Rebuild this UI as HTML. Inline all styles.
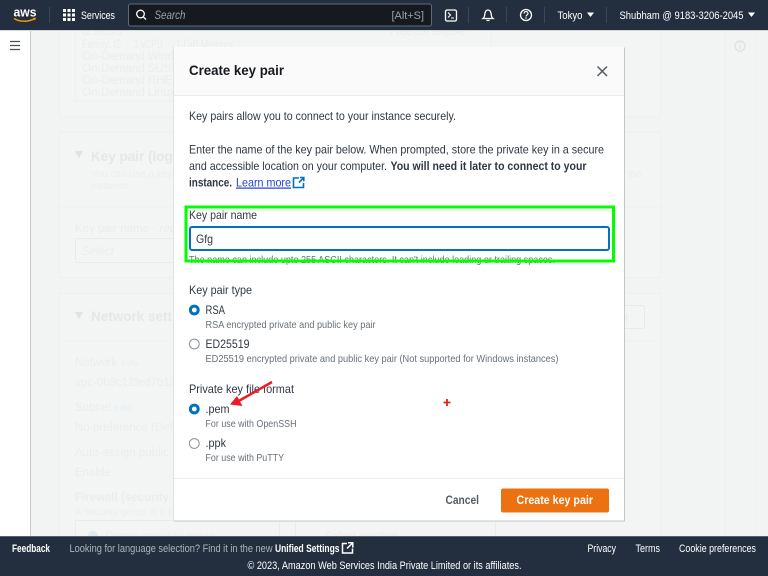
<!DOCTYPE html>
<html lang="en"><head><meta charset="utf-8"><title>Create key pair</title>
<style>
html,body{margin:0;padding:0;width:768px;height:576px;overflow:hidden;background:#f2f3f3}
svg{display:block;position:absolute;left:0;top:0}
text{font-family:"Liberation Sans",sans-serif;font-size:12px;fill:#2f3842;white-space:pre}
.bg{fill:#ebeded;font-size:11.5px}
.bgs{fill:#eceeee;font-size:10px}
.bgb{fill:#e6e8e8;font-size:13.5px;font-weight:bold}
.bl{fill:#e9f0f3;font-size:9.500px;font-weight:bold}
.d{fill:#687078;font-size:10.500px}
.h{fill:#fff;font-size:11px}
.hb{fill:#fff;font-size:11px;font-weight:bold}
</style></head><body>
<svg width="768" height="576" viewBox="0 0 768 576" xmlns="http://www.w3.org/2000/svg">
<rect width="768" height="576" fill="#f2f3f3"/>
<rect x="0" y="30" width="30" height="506" fill="#fff"/>
<rect x="30" y="30" width="1" height="506" fill="#c6cbcc"/>
<path d="M10 41.5h10M10 45.500h10M10 49.500h10" stroke="#4a525b" stroke-width="1.300"/>
<!-- background cards -->
<g fill="#f3f4f4" stroke="#eef0f0">
<rect x="59.500" y="20" width="601" height="97"/>
<rect x="59.500" y="132.500" width="601" height="145"/>
<rect x="59.500" y="293.500" width="601" height="260"/>
<rect x="75.500" y="20" width="416" height="81"/>
</g>
<path d="M60 207h600M60 341h600" stroke="#f0f1f1"/>
<path d="M725.500 30V536M755.500 30V536" stroke="#eef0f0"/>
<circle cx="740" cy="46" r="5" fill="none" stroke="#e0e3e3" stroke-width="1.400"/>
<path d="M740 45v4M740 42.500v1.300" stroke="#e0e3e3" stroke-width="1.400"/>
<text class="bg" x="82" y="35" textLength="40" lengthAdjust="spacingAndGlyphs">t2.micro</text>
<text class="bg" x="390" y="35" textLength="76" lengthAdjust="spacingAndGlyphs">Free tier eligible</text>
<text class="bg" x="82" y="48" textLength="39" lengthAdjust="spacingAndGlyphs">Family: t2</text>
<text class="bg" x="134" y="48" textLength="29" lengthAdjust="spacingAndGlyphs">1 vCPU</text>
<text class="bg" x="176" y="48" textLength="57" lengthAdjust="spacingAndGlyphs">1 GiB Memory</text>
<text class="bg" x="82" y="60">On-Demand Windows pricing</text>
<text class="bg" x="82" y="72">On-Demand SUSE pricing</text>
<text class="bg" x="82" y="84">On-Demand RHEL pricing</text>
<text class="bg" x="82" y="96">On-Demand Linux pricing</text>
<path d="M75 151h8l-4 7z" fill="#dfe2e2"/>
<text class="bgb" x="91" y="161">Key pair (login)</text>
<text class="bgs" x="91" y="177">You can use a key pair</text>
<text class="bgs" x="91" y="189">instance.</text>
<text class="bgs" x="628" y="177">the</text>
<text class="bg" x="75" y="232">Key pair name - <tspan font-style="italic">required</tspan></text>
<rect x="75.500" y="238.500" width="120" height="24" rx="2" fill="#f3f4f4" stroke="#e9ebeb"/>
<text class="bg" x="82" y="255" font-style="italic">Select</text>
<path d="M75 312h8l-4 7z" fill="#dfe2e2"/>
<text class="bgb" x="91" y="321">Network settings</text>
<rect x="600.500" y="305.500" width="44" height="23" rx="2" fill="#f3f4f4" stroke="#e8eaea"/>
<text class="bg" x="625" y="322">t</text>
<text class="bg" x="75" y="366">Network</text><text class="bl" x="121" y="366">Info</text>
<text class="bg" x="75" y="386">vpc-0b9c12fed7b13f</text>
<text class="bg" x="75" y="411">Subnet</text><text class="bl" x="114" y="411">Info</text>
<text class="bg" x="75" y="431">No preference (Default)</text>
<text class="bg" x="75" y="456">Auto-assign public IP</text>
<text class="bg" x="75" y="476">Enable</text>
<text class="bg" x="75" y="501" font-weight="bold">Firewall (security group)</text>
<text class="bgs" x="75" y="515">A security group is a set</text>
<rect x="75.500" y="520.500" width="204" height="30" fill="#f3f4f4" stroke="#e8ecee"/>
<rect x="295.500" y="520.500" width="200" height="30" fill="#f3f4f4" stroke="#e8ecee"/>
<circle cx="93" cy="536" r="5" fill="#dfe8ee"/>
<text class="bg" x="105" y="540">Create security group</text>
<text class="bg" x="324" y="540">Select existing</text>
<!-- modal -->
<rect x="174" y="47.500" width="451" height="474" fill="#c4c7c8"/>
<rect x="174" y="47" width="450" height="473.500" fill="#fff"/>
<rect x="174" y="47" width="450" height="48" fill="#fafafa"/>
<path d="M174 95.500h450M174 478.500h450" stroke="#eaeded"/>
<path d="M173.500 47V521" stroke="#dfe2e2"/>
<text x="189" y="75" textLength="95" lengthAdjust="spacingAndGlyphs" style="font-size:13.500px;font-weight:bold;fill:#16191f">Create key pair</text>
<path d="M597.500 66.500l9.500 9.500M607 66.500l-9.500 9.500" stroke="#545b64" stroke-width="1.500" fill="none"/>
<text x="189" y="120" textLength="267" lengthAdjust="spacingAndGlyphs">Key pairs allow you to connect to your instance securely.</text>
<text x="189" y="153.500" textLength="415" lengthAdjust="spacingAndGlyphs">Enter the name of the key pair below. When prompted, store the private key in a secure</text>
<text x="189" y="170" textLength="198" lengthAdjust="spacingAndGlyphs">and accessible location on your computer.</text>
<text x="390.500" y="170" textLength="196" lengthAdjust="spacingAndGlyphs" font-weight="bold">You will need it later to connect to your</text>
<text x="189" y="186.500" textLength="43" lengthAdjust="spacingAndGlyphs" font-weight="bold">instance.</text>
<text x="236" y="186.500" textLength="55" lengthAdjust="spacingAndGlyphs" style="fill:#1f3fd8" text-decoration="underline">Learn more</text>
<path d="M299 178h-5.500v9.500h10V183M299 182.500l4.500-4.500M300 177.500h3.800v3.800" stroke="#0073bb" stroke-width="1.600" fill="none"/>
<text x="189" y="219" textLength="68" lengthAdjust="spacingAndGlyphs">Key pair name</text>
<rect x="190" y="227" width="419" height="23" rx="2" fill="#fff" stroke="#0073bb" stroke-width="2"/>
<text x="196" y="243" textLength="17" lengthAdjust="spacingAndGlyphs">Gfg</text>
<text x="189" y="263" textLength="366" lengthAdjust="spacingAndGlyphs" style="font-size:10.500px;fill:#687078">The name can include upto 255 ASCII characters. It can't include leading or trailing spaces.</text>
<rect x="186" y="207" width="427.500" height="54" fill="none" stroke="#00ff00" stroke-width="3"/>
<text x="189" y="294" textLength="63" lengthAdjust="spacingAndGlyphs">Key pair type</text>
<circle cx="194.300" cy="310" r="3.900" fill="#fff" stroke="#0073bb" stroke-width="3"/>
<text x="205.500" y="314" textLength="19.500" lengthAdjust="spacingAndGlyphs">RSA</text>
<text class="d" x="205.500" y="328" textLength="170" lengthAdjust="spacingAndGlyphs">RSA encrypted private and public key pair</text>
<circle cx="194.300" cy="344" r="4.900" fill="#fff" stroke="#8a9198" stroke-width="1"/>
<text x="205.500" y="348" textLength="44" lengthAdjust="spacingAndGlyphs">ED25519</text>
<text class="d" x="205.500" y="362" textLength="353" lengthAdjust="spacingAndGlyphs">ED25519 encrypted private and public key pair (Not supported for Windows instances)</text>
<text x="189" y="393" textLength="105" lengthAdjust="spacingAndGlyphs">Private key file format</text>
<circle cx="194.300" cy="409" r="3.900" fill="#fff" stroke="#0073bb" stroke-width="3"/>
<text x="205.500" y="413" textLength="24" lengthAdjust="spacingAndGlyphs">.pem</text>
<text class="d" x="205.500" y="427" textLength="91" lengthAdjust="spacingAndGlyphs">For use with OpenSSH</text>
<circle cx="194.300" cy="443.500" r="4.900" fill="#fff" stroke="#8a9198" stroke-width="1"/>
<text x="205.500" y="447" textLength="20.500" lengthAdjust="spacingAndGlyphs">.ppk</text>
<text class="d" x="205.500" y="461" textLength="78.500" lengthAdjust="spacingAndGlyphs">For use with PuTTY</text>
<path d="M272 382L237 402" stroke="#ed1c24" stroke-width="2.500" fill="none"/>
<path d="M230 404.500L237 396L242.500 406z" fill="#ed1c24"/>
<path d="M447 399v7M443.500 402.500h7" stroke="#f01c1c" stroke-width="1.800"/>
<text x="445.500" y="504" textLength="33.500" lengthAdjust="spacingAndGlyphs" style="font-weight:bold;fill:#545b64">Cancel</text>
<rect x="501" y="488.500" width="108" height="24" rx="2" fill="#ec7211"/>
<text x="516.500" y="504" textLength="76.500" lengthAdjust="spacingAndGlyphs" style="font-weight:bold;fill:#fff">Create key pair</text>
<!-- header -->
<rect width="768" height="30" fill="#232f3e"/>
<rect y="30" width="768" height="1" fill="#d5d8d8"/>
<text x="13.500" y="16.500" textLength="23" lengthAdjust="spacingAndGlyphs" style="font-size:12.500px;font-weight:bold;fill:#fff">aws</text>
<path d="M14 18.500c6 3.600 14.500 3.600 20.500 .3" stroke="#ff9900" stroke-width="1.400" fill="none"/>
<path d="M33 18l3 -.4-1 3z" fill="#ff9900"/>
<path d="M49.500 7V23M468.500 7V23M506.500 7V23M544.500 7V23M606.500 7V23" stroke="#3c4855"/>
<g fill="#fff">
<rect x="63" y="9" width="3" height="3"/><rect x="67.500" y="9" width="3" height="3"/><rect x="72" y="9" width="3" height="3"/>
<rect x="63" y="13.500" width="3" height="3"/><rect x="67.500" y="13.500" width="3" height="3"/><rect x="72" y="13.500" width="3" height="3"/>
<rect x="63" y="18" width="3" height="3"/><rect x="67.500" y="18" width="3" height="3"/><rect x="72" y="18" width="3" height="3"/>
</g>
<text class="h" x="81" y="19" textLength="34" lengthAdjust="spacingAndGlyphs">Services</text>
<rect x="128.500" y="4" width="303" height="22" rx="2" fill="#16191f" stroke="#5f6b7a"/>
<circle cx="140.500" cy="14" r="3.800" fill="none" stroke="#fff" stroke-width="1.300"/>
<path d="M143.300 16.800l2.700 2.700" stroke="#fff" stroke-width="1.300"/>
<text x="154.500" y="19" textLength="31" lengthAdjust="spacingAndGlyphs" style="font-size:11.500px;font-style:italic;fill:#95a5a6">Search</text>
<text x="391.500" y="19" textLength="32.500" lengthAdjust="spacingAndGlyphs" style="font-size:11px;fill:#95a5a6">[Alt+S]</text>
<rect x="445.500" y="10" width="11" height="11" rx="1.500" fill="none" stroke="#fff" stroke-width="1.300"/>
<path d="M448 12.500l2.500 2.500-2.500 2.500M451 18h3" stroke="#fff" stroke-width="1.100" fill="none"/>
<path d="M483 18.500c2-1.500 1.500-3.500 2-5.500.5-1.800 1.800-3 3-3s2.500 1.200 3 3c.5 2 0 4 2 5.500z" fill="none" stroke="#fff" stroke-width="1.300"/>
<path d="M486.500 20a2 1.600 0 0 0 3 0" fill="none" stroke="#fff" stroke-width="1.200"/>
<circle cx="526" cy="15" r="5.500" fill="none" stroke="#fff" stroke-width="1.300"/>
<path d="M524 13.500c0-2.600 4-2.600 4 0 0 1.400-2 1.500-2 3" fill="none" stroke="#fff" stroke-width="1.200"/>
<rect x="525.400" y="17.300" width="1.300" height="1.300" fill="#fff"/>
<text class="h" x="557.500" y="19" textLength="25" lengthAdjust="spacingAndGlyphs">Tokyo</text>
<path d="M587 12.500h7l-3.500 4.500z" fill="#fff"/>
<text class="h" x="619.500" y="19" textLength="124" lengthAdjust="spacingAndGlyphs">Shubham @ 9183-3206-2045</text>
<path d="M748 12.500h7l-3.500 4.500z" fill="#fff"/>
<!-- footer -->
<rect y="536" width="768" height="40" fill="#232f3e"/>
<rect y="536" width="768" height="1" fill="#55606c"/>
<text class="hb" x="12" y="552" textLength="38" lengthAdjust="spacingAndGlyphs">Feedback</text>
<text x="69.500" y="552" textLength="203" lengthAdjust="spacingAndGlyphs" style="font-size:11px;fill:#aab7b8">Looking for language selection? Find it in the new</text>
<text class="hb" x="275" y="552" textLength="64.500" lengthAdjust="spacingAndGlyphs">Unified Settings</text>
<path d="M347 543.500h-4.500v9.500h10v-4.500M347 548.500l5-5M348 542.800h4.800v4.800" stroke="#fff" stroke-width="1.500" fill="none"/>
<text class="h" x="587.500" y="552" textLength="28.500" lengthAdjust="spacingAndGlyphs">Privacy</text>
<text class="h" x="635.500" y="552" textLength="24.500" lengthAdjust="spacingAndGlyphs">Terms</text>
<text class="h" x="679" y="552" textLength="77" lengthAdjust="spacingAndGlyphs">Cookie preferences</text>
<text class="h" x="247.500" y="569" textLength="274" lengthAdjust="spacingAndGlyphs">© 2023, Amazon Web Services India Private Limited or its affiliates.</text>
</svg>
</body></html>
